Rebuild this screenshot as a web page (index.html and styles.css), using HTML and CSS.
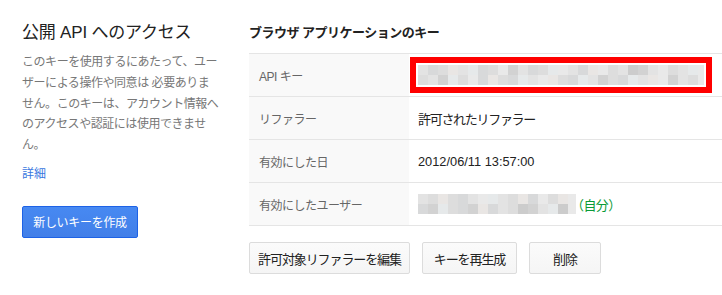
FILE: index.html
```html
<!DOCTYPE html>
<html lang="ja">
<head>
<meta charset="utf-8">
<title>公開 API へのアクセス</title>
<link rel="stylesheet" href="styles.css">
</head>
<body>
<div class="page">
  <aside class="side">
    <h1 class="side-title">公開 API へのアクセス</h1>
    <p class="side-desc">このキーを使用するにあたって、ユー<br>ザーによる操作や同意は 必要ありま<br>せん。このキーは、アカウント情報へ<br>のアクセスや認証には使用できませ<br>ん。</p>
    <a class="side-link" href="#">詳細</a>
    <div class="side-actions"><button class="btn-primary" type="button">新しいキーを作成</button></div>
  </aside>
  <main class="main">
    <h2 class="main-title">ブラウザ アプリケーションのキー</h2>
    <div class="table">
      <div class="row">
        <div class="label">API キー</div>
        <div class="value">
          <div class="highlight">
            <div class="mosaic mosaic-key">
              <i class="m1"></i><i class="m3"></i><i class="m2"></i><i class="m6"></i><i class="m1"></i><i class="m5"></i><i class="m3"></i><i class="m2"></i><i class="m0"></i><i class="m4"></i><i class="m1"></i><i class="m3"></i><i class="m2"></i><i class="m5"></i><i class="m0"></i><i class="m1"></i><i class="m3"></i><i class="m6"></i><i class="m0"></i><i class="m2"></i><i class="m1"></i><i class="m7"></i><i class="m4"></i><i class="m1"></i><i class="m0"></i><i class="m2"></i><i class="m1"></i><i class="m5"></i><i class="m0"></i>
              <i class="m2"></i><i class="m1"></i><i class="m4"></i><i class="m5"></i><i class="m2"></i><i class="m0"></i><i class="m3"></i><i class="m6"></i><i class="m2"></i><i class="m3"></i><i class="m5"></i><i class="m1"></i><i class="m0"></i><i class="m6"></i><i class="m2"></i><i class="m3"></i><i class="m5"></i><i class="m1"></i><i class="m4"></i><i class="m2"></i><i class="m3"></i><i class="m5"></i><i class="m1"></i><i class="m6"></i><i class="m0"></i><i class="m4"></i><i class="m1"></i><i class="m2"></i><i class="m0"></i>
            </div>
          </div>
        </div>
      </div>
      <div class="row">
        <div class="label">リファラー</div>
        <div class="value">許可されたリファラー</div>
      </div>
      <div class="row">
        <div class="label">有効にした日</div>
        <div class="value date">2012/06/11 13:57:00</div>
      </div>
      <div class="row">
        <div class="label">有効にしたユーザー</div>
        <div class="value">
          <div class="mosaic mosaic-user">
            <i class="m1"></i><i class="m2"></i><i class="m6"></i><i class="m2"></i><i class="m3"></i><i class="m1"></i><i class="m0"></i><i class="m5"></i><i class="m1"></i><i class="m2"></i><i class="m6"></i><i class="m3"></i><i class="m0"></i><i class="m2"></i><i class="m6"></i><i class="m0"></i>
            <i class="m3"></i><i class="m4"></i><i class="m5"></i><i class="m2"></i><i class="m3"></i><i class="m4"></i><i class="m6"></i><i class="m3"></i><i class="m1"></i><i class="m2"></i><i class="m7"></i><i class="m4"></i><i class="m1"></i><i class="m5"></i><i class="m7"></i><i class="m0"></i>
          </div>
          <span class="self">（自分）</span>
        </div>
      </div>
    </div>
    <div class="actions">
      <button class="btn btn-edit" type="button">許可対象リファラーを編集</button>
      <button class="btn btn-regen" type="button">キーを再生成</button>
      <button class="btn btn-delete" type="button">削除</button>
    </div>
  </main>
</div>
</body>
</html>
```

FILE: styles.css
```css
* { box-sizing: border-box; }
html, body { margin: 0; padding: 0; background: #fff; }
body {
  font-family: "Liberation Sans", "Noto Sans CJK JP", sans-serif;
  color: #222;
  width: 722px;
  height: 295px;
  overflow: hidden;
}
.page {
  display: flex;
  gap: 31px;
  padding-left: 22px;
}
.side {
  width: 196px;
  flex: none;
  padding-top: 20px;
}
.side-title {
  margin: 0;
  font-size: 17px;
  font-weight: normal;
  line-height: 26px;
  letter-spacing: -0.2px;
  color: #222;
  white-space: nowrap;
}
.side-desc {
  margin: 6px 0 0;
  font-size: 12px;
  line-height: 20.8px;
  letter-spacing: -0.45px;
  color: #777;
  white-space: nowrap;
}
.side-link {
  display: block;
  margin-top: 8px;
  font-size: 12px;
  line-height: 20px;
  color: #3a77e0;
  text-decoration: none;
}
.side-actions { margin-top: 22px; }
.btn-primary {
  font-family: inherit;
  height: 32px;
  width: 116px;
  padding: 0;
  border: 1px solid #1d62e6;
  border-radius: 2px;
  background: linear-gradient(#4789f2, #427fe8);
  color: #fff;
  font-size: 12px;
  letter-spacing: -0.3px;
}
.main {
  flex: 1;
  padding-top: 23px;
  min-width: 0;
}
.main-title {
  margin: 0 0 10px;
  font-size: 13px;
  font-weight: bold;
  line-height: 20px;
  letter-spacing: -0.5px;
  color: #222;
  white-space: nowrap;
}
.table { border-top: 1px solid #e5e5e5; }
.row {
  display: grid;
  grid-template-columns: 160px 1fr;
  height: 43px;
  border-bottom: 1px solid #e5e5e5;
}
.label {
  background: #f9f9f9;
  display: flex;
  align-items: center;
  padding-left: 10px;
  font-size: 12px;
  letter-spacing: -0.5px;
  color: #666;
}
.value {
  display: flex;
  align-items: center;
  padding-left: 9px;
  font-size: 13px;
  letter-spacing: -1.3px;
  color: #222;
  white-space: nowrap;
}
.value.date { letter-spacing: 0; font-size: 12.8px; }
.row:first-child .value { padding-left: 1px; align-items: flex-start; }
.highlight {
  margin-top: 3px;
  width: 302px;
  height: 36px;
  border: 6px solid #ff0000;
  padding: 2px;
  background: #fff;
}
.mosaic {
  display: grid;
  grid-auto-rows: 10px;
  height: 20px;
  overflow: hidden;
}
.mosaic-key {
  grid-template-columns: repeat(29, 10px);
  width: 286px;
}
.mosaic-user {
  grid-template-columns: repeat(16, 10px);
  width: 158px;
}
.mosaic i { display: block; }
.m0 { background: #e9e9e9; }
.m1 { background: #e3e3e3; }
.m2 { background: #dddddd; }
.m3 { background: #d8d9da; }
.m4 { background: #d2d2d2; }
.m5 { background: #e6e9ea; }
.m6 { background: #e9e6e4; }
.m7 { background: #cccccc; }
.self {
  color: #0a9a38;
  font-size: 13px;
  letter-spacing: -0.6px;
  margin-left: -5px;
}
.actions {
  display: flex;
  gap: 12px;
  margin-top: 16px;
}
.btn {
  font-family: inherit;
  height: 32px;
  padding: 0;
  border: 1px solid #dcdcdc;
  border-radius: 2px;
  background: linear-gradient(#fbfbfb, #f5f5f5);
  color: #222;
  font-size: 13px;
  letter-spacing: -1.1px;
}
.btn-edit { width: 161px; }
.btn-regen { width: 95px; }
.btn-delete { width: 72px; }
```
